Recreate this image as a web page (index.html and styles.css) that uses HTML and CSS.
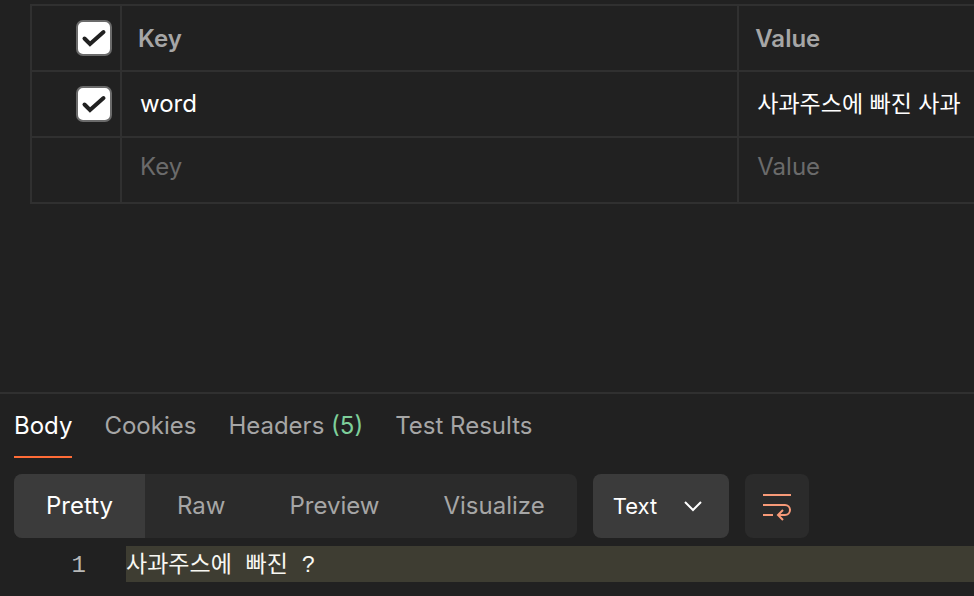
FILE: index.html
```html
<!DOCTYPE html>
<html lang="ko">
<head>
    <meta charset="UTF-8">
    <meta name="viewport" content="width=device-width, initial-scale=1.0">
    <title>Params</title>
    <link rel="stylesheet" href="styles.css">
</head>
<body>
    <section class="params">
        <table class="params-table">
            <colgroup>
                <col class="col-check">
                <col class="col-key">
                <col class="col-value">
            </colgroup>
            <thead>
                <tr>
                    <td>
                        <label class="check">
                            <input type="checkbox" aria-label="Select all" checked>
                            <svg viewBox="0 0 36 36"><path d="M8.5 18.5l5.5 5.500L27.500 12"/></svg>
                        </label>
                    </td>
                    <th>Key</th>
                    <th>Value</th>
                </tr>
            </thead>
            <tbody>
                <tr>
                    <td>
                        <label class="check">
                            <input type="checkbox" aria-label="Use word" checked>
                            <svg viewBox="0 0 36 36"><path d="M8.5 18.5l5.5 5.500L27.500 12"/></svg>
                        </label>
                    </td>
                    <td><input class="cell" type="text" aria-label="Key" value="word"></td>
                    <td><input class="cell korean" type="text" aria-label="Value" value="사과주스에 빠진 사과"></td>
                </tr>
                <tr class="empty">
                    <td></td>
                    <td><input class="cell" type="text" aria-label="New key" placeholder="Key"></td>
                    <td><input class="cell" type="text" aria-label="New value" placeholder="Value"></td>
                </tr>
            </tbody>
        </table>
    </section>

    <section class="response">
        <nav class="tabs">
            <a href="#body" class="tab active">Body</a>
            <a href="#cookies" class="tab">Cookies</a>
            <a href="#headers" class="tab">Headers <span class="count">(5)</span></a>
            <a href="#tests" class="tab">Test Results</a>
        </nav>

        <div class="toolbar">
            <div class="modes">
                <button type="button" class="mode active">Pretty</button>
                <button type="button" class="mode">Raw</button>
                <button type="button" class="mode">Preview</button>
                <button type="button" class="mode">Visualize</button>
            </div>
            <div class="language">
                <select aria-label="Language">
                    <option>Text</option>
                    <option>JSON</option>
                    <option>HTML</option>
                </select>
                <svg viewBox="0 0 20 12"><path d="M2 2l8 8 8-8"/></svg>
            </div>
            <button type="button" class="wrap" aria-label="Wrap lines">
                <svg viewBox="0 0 32 32">
                    <path d="M2 5h28M2 15h22a5 5 0 0 1 0 10h-6M2 25h10"/>
                    <path d="M22 20l-5 5 5 5"/>
                </svg>
            </button>
        </div>

        <div class="editor">
            <span class="line-number">1</span>
            <code class="line korean">사과주스에 빠진 ?</code>
        </div>
    </section>
</body>
</html>
```

FILE: styles.css
```css
* {
    margin: 0;
    padding: 0;
    box-sizing: border-box;
}

body {
    background: #212121;
    color: #fff;
    font-family: 'Inter', 'Noto Sans CJK KR', sans-serif;
    font-size: 24px;
    line-height: 32px;
}

button,
input,
select {
    font: inherit;
    color: inherit;
    background: none;
    border: none;
    outline: none;
}

svg {
    fill: none;
    stroke: currentColor;
}

/* Params table */
.params {
    padding: 4px 0 0 30px;
    min-height: 392px;
}

.params-table {
    width: 100%;
    table-layout: fixed;
    border-collapse: collapse;
}

.col-check {
    width: 90px;
}

.col-value {
    width: 25%;
}

.params-table th,
.params-table td {
    height: 66px;
    border: 2px solid #303030;
    border-right: none;
    vertical-align: middle;
}

.params-table th {
    padding: 2px 0 0 16px;
    color: #a6a6a6;
    font-weight: 600;
    text-align: left;
}

.check {
    position: relative;
    display: block;
    width: 36px;
    height: 36px;
    margin-left: auto;
    margin-right: 8px;
}

.check input {
    appearance: none;
    display: block;
    width: 36px;
    height: 36px;
    background: #fff;
    border: 2px solid #6b6b6b;
    border-radius: 7px;
}

.check svg {
    position: absolute;
    inset: 0;
    color: #212121;
    stroke-width: 4;
    stroke-linecap: round;
    pointer-events: none;
}

.check input:not(:checked) + svg {
    display: none;
}

.cell {
    display: block;
    width: 100%;
    height: 32px;
    padding-left: 18px;
}

.cell::placeholder {
    color: #6b6b6b;
    opacity: 1;
}

.empty .cell {
    margin-bottom: 6px;
}

.korean {
    font-size: 23px;
}

/* Response */
.response {
    border-top: 2px solid #303030;
}

.tabs {
    display: flex;
    gap: 32px;
    padding: 0 14px;
}

.tab {
    padding: 16px 0 14px;
    border-bottom: 2px solid transparent;
    color: #a6a6a6;
    text-decoration: none;
}

.tab.active {
    color: #fff;
    border-color: #ff6c37;
}

.count {
    color: #7ecf9a;
}

.toolbar {
    display: flex;
    gap: 16px;
    padding: 16px 14px 8px;
}

.modes {
    display: flex;
    height: 64px;
    background: #2b2b2b;
    border-radius: 8px;
    overflow: hidden;
}

.mode {
    padding: 0 32px;
    color: #a6a6a6;
}

.mode.active {
    background: #3b3b3b;
    color: #fff;
}

.language {
    position: relative;
    width: 136px;
    height: 64px;
    background: #3b3b3b;
    border-radius: 8px;
}

.language select {
    appearance: none;
    width: 100%;
    height: 100%;
    padding-left: 20px;
    font-size: 22px;
}

.language svg {
    position: absolute;
    top: 26px;
    right: 26px;
    width: 20px;
    height: 12px;
    stroke-width: 2;
    pointer-events: none;
}

.wrap {
    display: flex;
    align-items: center;
    justify-content: center;
    width: 64px;
    height: 64px;
    background: #2b2b2b;
    border-radius: 8px;
    color: #f79a78;
}

.wrap svg {
    width: 32px;
    height: 32px;
    stroke-width: 2;
}

.editor {
    display: flex;
    font-family: 'Liberation Mono', 'Noto Sans CJK KR', monospace;
    line-height: 40px;
}

.line-number {
    width: 126px;
    padding-right: 40px;
    color: #b8b8b8;
    text-align: right;
}

.line {
    flex: 1;
    height: 36px;
    background: #3e3d32;
    color: #f8f8f2;
    font-family: inherit;
}
```
